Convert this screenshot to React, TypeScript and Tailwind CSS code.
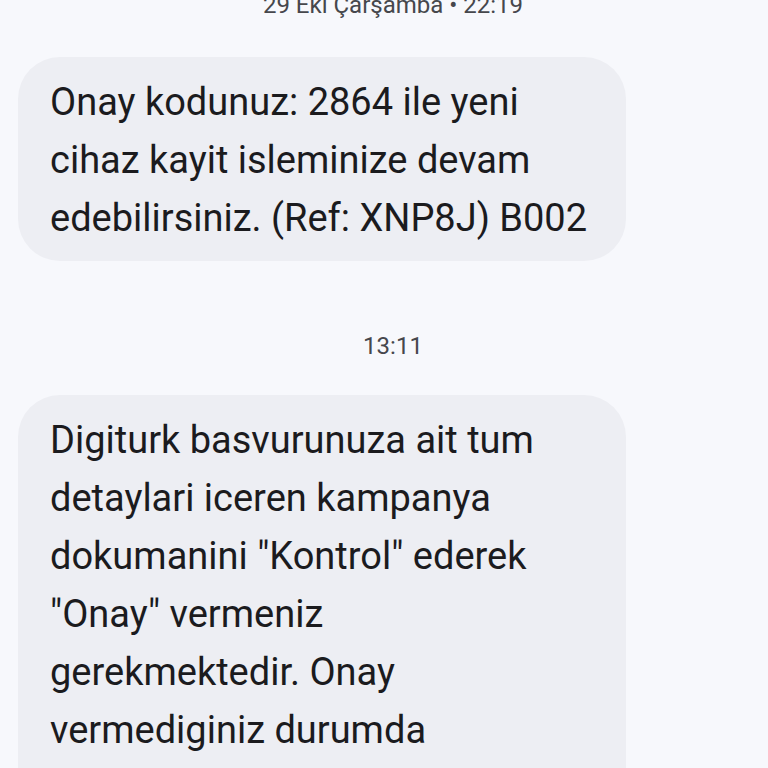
const first = [
  "Onay kodunuz: 2864 ile yeni",
  "cihaz kayit isleminize devam",
  "edebilirsiniz. (Ref: XNP8J) B002",
];

const second = [
  "Digiturk basvurunuza ait tum",
  "detaylari iceren kampanya",
  'dokumanini "Kontrol" ederek',
  '"Onay" vermeniz',
  "gerekmektedir. Onay",
  "vermediginiz durumda",
  "basvurunuz iptal edilecektir.",
];

function Stamp({ text, className }: { text: string; className?: string }) {
  return (
    <div className={`pl-[18px] text-center text-[24px] leading-[30px] text-[#46474c] ${className ?? ""}`}>
      {text}
    </div>
  );
}

function Bubble({ lines }: { lines: string[] }) {
  return (
    <div className="ml-[18px] w-[608px] rounded-[42px] bg-[#edeef3] px-[32px] pt-[16px] pb-[14px] text-[38px] leading-[58px] text-[#1b1b1e]">
      {lines.map((l) => (
        <div key={l} className="whitespace-nowrap">
          {l}
        </div>
      ))}
    </div>
  );
}

export default function App() {
  return (
    <div className="h-[768px] w-[768px] overflow-hidden bg-[#f7f8fc] font-['Roboto',sans-serif]">
      <Stamp text="29 Eki Çarşamba • 22:19" className="-mt-[10px]" />
      <div className="mt-[37px]">
        <Bubble lines={first} />
      </div>
      <Stamp text="13:11" className="mt-[70px]" />
      <div className="mt-[34px]">
        <Bubble lines={second} />
      </div>
    </div>
  );
}
